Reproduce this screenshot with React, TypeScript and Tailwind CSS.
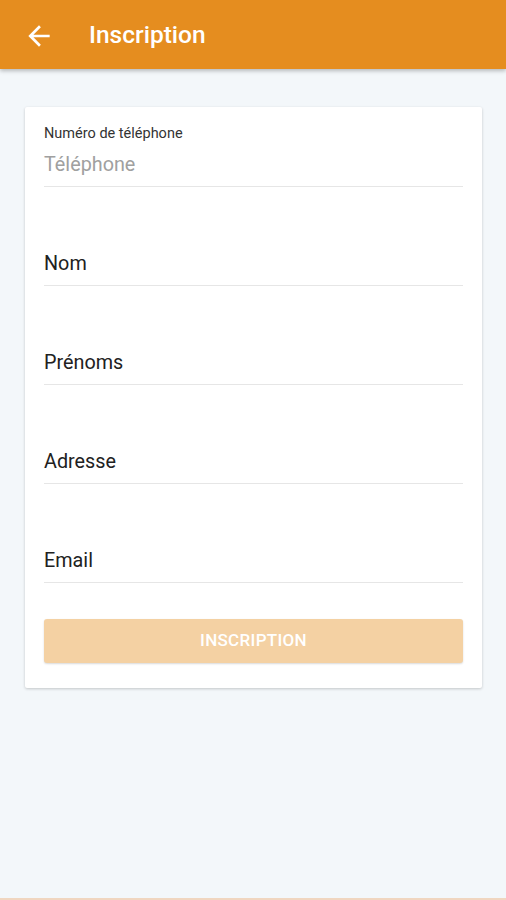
import React from 'react';

const ArrowBack: React.FC = () => (
  <svg width="32" height="32" viewBox="0 0 24 24" fill="none">
    <path d="M20 11H7.83l5.59-5.59L12 4l-8 8 8 8 1.41-1.41L7.83 13H20v-2z" fill="#ffffff" />
  </svg>
);

const fields = ['Nom', 'Prénoms', 'Adresse', 'Email'];

const App: React.FC = () => {
  return (
    <div className="flex h-[900px] flex-col bg-[#f3f7fa] font-['Roboto',sans-serif]">
      {/* Header */}
      <div className="relative z-10 flex h-[69px] shrink-0 items-center bg-[#e58d1f] pt-[2px] pl-[23px] shadow-[0_2px_4px_rgba(0,0,0,0.25)]">
        <ArrowBack />
        <h1 className="ml-[34px] text-[24.5px] font-medium text-white">Inscription</h1>
      </div>

      {/* Form card */}
      <div className="flex-1 px-[25px] pt-[38px]">
        <div className="w-[457px] rounded-[2px] bg-white px-[19px] pt-[19px] pb-[25px] shadow-[0_1px_3px_rgba(0,0,0,0.2)]">
          <div className="border-b border-[#e6e6e6] pb-[9px]">
            <div className="text-[14.5px] leading-4 text-[#333333]">Numéro de téléphone</div>
            <div className="mt-[11px] text-[19.8px] leading-6 text-[#a0a0a0]">Téléphone</div>
          </div>

          {fields.map((f) => (
            <div key={f} className="flex h-[99px] flex-col justify-end border-b border-[#e6e6e6] pb-[9px]">
              <div className="text-[19.8px] leading-6 text-[#212121]">{f}</div>
            </div>
          ))}

          <button className="mt-[36px] flex h-[44px] w-full items-center justify-center rounded-[3px] bg-[#f4d1a3] text-[17px] font-medium tracking-[0.3px] text-white uppercase shadow-[0_1px_2px_rgba(0,0,0,0.15)]">
            Inscription
          </button>
        </div>
      </div>

      <div className="h-[2px] shrink-0 bg-[#f0d6c0]" />
    </div>
  );
};

export default App;
